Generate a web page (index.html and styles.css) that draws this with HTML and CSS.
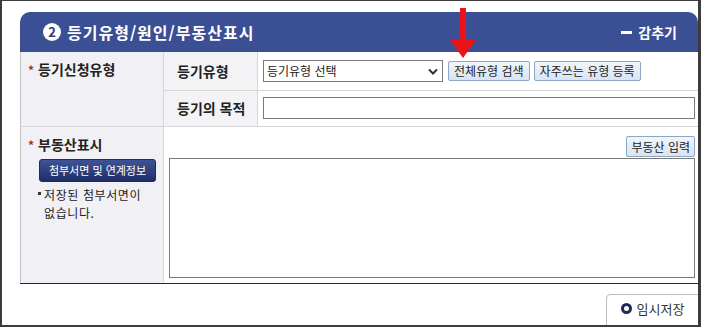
FILE: index.html
```html
<!DOCTYPE html>
<html lang="ko">
  <head>
    <meta charset="UTF-8" />
    <meta name="viewport" content="width=device-width, initial-scale=1.0" />
    <title>등기유형/원인/부동산표시</title>
    <link rel="stylesheet" href="styles.css">
  </head>
  <body>
    <div class="screen">
      <!-- Section header -->
      <div class="panel-head">
        <h2 class="panel-title"><span class="step">2</span>등기유형/원인/부동산표시</h2>
        <a href="#" class="toggle"><span class="dash"></span>감추기</a>
      </div>

      <!-- Form table -->
      <table class="form-table">
        <colgroup>
          <col class="c1" />
          <col class="c2" />
          <col />
        </colgroup>
        <tbody>
          <tr class="row-type">
            <th rowspan="2" class="group"><span class="req">*</span>등기신청유형</th>
            <th class="label">등기유형</th>
            <td class="field">
              <div class="controls">
                <div class="select-wrap">
                  <select class="select">
                    <option>등기유형 선택</option>
                  </select>
                  <svg class="chev" width="10" height="7" viewBox="0 0 10 7"><path d="M1 1.5 L5 5.5 L9 1.5" fill="none" stroke="#333" stroke-width="2"/></svg>
                </div>
                <button class="btn-light">전체유형 검색</button>
                <button class="btn-light">자주쓰는 유형 등록</button>
              </div>
            </td>
          </tr>
          <tr class="row-purpose">
            <th class="label">등기의 목적</th>
            <td class="field"><input type="text" class="text-input" /></td>
          </tr>
          <tr class="row-estate">
            <th class="group">
              <div><span class="req">*</span>부동산표시</div>
              <button class="btn-dark">첨부서면 및 연계정보</button>
              <div class="note"><span class="bullet"></span><span>저장된 첨부서면이<br />없습니다.</span></div>
            </th>
            <td colspan="2" class="estate">
              <div class="estate-tools"><button class="btn-light">부동산 입력</button></div>
              <textarea class="estate-box"></textarea>
            </td>
          </tr>
        </tbody>
      </table>

      <div class="save-bar">
        <button class="btn-save"><span class="ring"></span>임시저장</button>
      </div>

      <!-- annotation arrow -->
      <svg class="arrow" width="26" height="52" viewBox="0 0 26 52">
        <rect x="10" y="0" width="6" height="34" fill="#e8131b"/>
        <polygon points="0,32 26,32 13,50" fill="#e8131b"/>
      </svg>
    </div>
  </body>
</html>
```

FILE: styles.css
```css
/* General Styles */
body {
  margin: 0;
  padding: 0;
  background: #fff;
  font-family: "Noto Sans CJK KR", "Liberation Sans", sans-serif;
  font-size: 12px;
  color: #222;
}
.screen {
  position: relative;
  width: 701px;
  height: 327px;
  box-sizing: border-box;
  border-style: solid;
  border-color: #3c3c3c;
  border-width: 1px 3px 2px 2px;
  padding: 11px 0 0 18px;
  overflow: hidden;
}

/* Header */
.panel-head {
  height: 40px;
  background: #3b4f94;
  border-radius: 10px 10px 0 0;
  display: flex;
  align-items: center;
  justify-content: space-between;
  padding: 0 21px 0 23px;
  color: #fff;
}
.panel-title {
  margin: 0;
  display: flex;
  align-items: center;
  font-size: 16px;
  font-weight: bold;
  letter-spacing: 1px;
}
.step {
  width: 18px;
  height: 18px;
  border-radius: 50%;
  background: #fff;
  color: #2c3d7a;
  font-size: 13px;
  line-height: 18px;
  text-align: center;
  margin-right: 6px;
  letter-spacing: 0;
}
.toggle {
  display: flex;
  align-items: center;
  color: #fff;
  text-decoration: none;
  font-size: 14px;
  font-weight: bold;
}
.dash {
  width: 11px;
  height: 3px;
  background: #fff;
  margin-right: 6px;
}

/* Table */
.form-table {
  width: 100%;
  border-collapse: collapse;
  table-layout: fixed;
}
.c1 {
  width: 143px;
}
.c2 {
  width: 94px;
}
.form-table th,
.form-table td {
  border-bottom: 1px solid #d6d6d6;
  padding: 0;
}
.form-table tr:last-child th,
.form-table tr:last-child td {
  border-bottom: 1px solid #2a2a2a;
}
.group {
  background: #f1f1f5;
  border-left: 1px solid #c4c4c4;
  border-right: 1px solid #d6d6d6;
  vertical-align: top;
  text-align: left;
  padding: 9px 0 0 7px !important;
  font-size: 14px;
  line-height: 16px;
  color: #222;
}
.req {
  color: #b3262a;
  font-size: 12px;
  margin-right: 4px;
}
.label {
  background: #f3f3f6;
  border-right: 1px solid #d6d6d6;
  text-align: left;
  padding-left: 13px !important;
  font-size: 14px;
  color: #222;
}
.row-type {
  height: 38px;
}
.row-purpose {
  height: 36px;
}
.row-estate {
  height: 157px;
}
.field {
  padding: 0 3px 0 5px !important;
}
.controls {
  display: flex;
  align-items: center;
  gap: 4px;
}
.select-wrap {
  position: relative;
  width: 180px;
  margin-right: 1px;
}
.select {
  appearance: none;
  width: 100%;
  height: 22px;
  border: 1px solid #7a7a7a;
  background: #fff;
  font-family: inherit;
  font-size: 12px;
  color: #222;
  padding: 0 3px;
}
.chev {
  position: absolute;
  right: 5px;
  top: 8px;
}
.btn-light {
  height: 20px;
  padding: 0 5px;
  border: 1px solid #8ea6c4;
  border-radius: 2px;
  background: linear-gradient(#f1f6fc, #d6e4f4);
  font-family: inherit;
  font-size: 12px;
  color: #222;
}
.text-input {
  display: block;
  width: 100%;
  height: 22px;
  box-sizing: border-box;
  border: 1px solid #7a7a7a;
}

/* Estate row */
.btn-dark {
  display: block;
  margin: 6px 0 0 11px;
  width: 117px;
  height: 23px;
  border: 1px solid #1c2a5e;
  border-radius: 3px;
  background: linear-gradient(#3f5396, #1f2e68);
  color: #fff;
  font-family: inherit;
  font-size: 11px;
  padding: 0;
}
.note {
  display: flex;
  margin: 4px 0 0 10px;
  font-size: 12px;
  font-weight: normal;
  line-height: 18px;
  letter-spacing: 0.6px;
}
.bullet {
  width: 3px;
  height: 3px;
  background: #333;
  margin: 6px 3px 0 0;
  flex: none;
}
.estate {
  vertical-align: top;
  padding: 9px 3px 0 5px !important;
}
.estate-tools {
  display: flex;
  justify-content: flex-end;
  margin-bottom: 1px;
}
.estate-tools .btn-light {
  height: 21px;
  padding: 0 4px;
}
.estate-box {
  display: block;
  width: 100%;
  height: 120px;
  box-sizing: border-box;
  border: 1px solid #7a7a7a;
  resize: none;
  margin: 0 0 5px 0;
}

/* Save */
.save-bar {
  display: flex;
  justify-content: flex-end;
  padding-top: 10px;
}
.btn-save {
  display: flex;
  align-items: center;
  justify-content: center;
  width: 92px;
  height: 32px;
  border: 1px solid #bdbdbd;
  border-right: none;
  border-radius: 5px 0 0 0;
  background: #fff;
  font-family: inherit;
  font-size: 13px;
  color: #333;
  padding: 0 0 2px 0;
}
.ring {
  width: 5px;
  height: 5px;
  border: 3px solid #1e2a57;
  border-radius: 50%;
  margin-right: 5px;
}

.arrow {
  position: absolute;
  left: 448px;
  top: 7px;
}
```
